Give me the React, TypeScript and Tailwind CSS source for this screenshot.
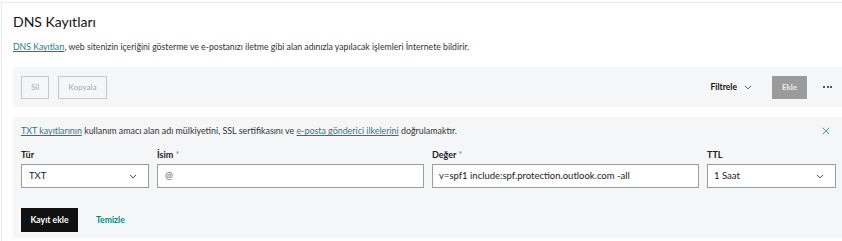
import React from "react";

const Chevron = ({ className = "" }: { className?: string }) => (
  <svg viewBox="0 0 12 8" className={className} fill="none" stroke="currentColor" strokeWidth="1.4" strokeLinecap="round" strokeLinejoin="round">
    <path d="M1.5 1.8 L6 6.2 L10.5 1.8" />
  </svg>
);

export default function App() {
  return (
    <div className="w-[842px] h-[241px] bg-white overflow-hidden" style={{ fontFamily: "Lato, 'Open Sans', sans-serif" }}>
      <div className="mt-[2px] ml-[1px] border-t border-l border-[#e8e8e8] pl-[11px] pt-[9px] h-[239px]">
        <h1 className="text-[14px] leading-[20px] text-[#111] font-normal">DNS Kayıtları</h1>
        <p className="mt-[9px] text-[8.7px] leading-[12px] text-[#333]">
          <a className="underline text-[#1b7d86] decoration-[#1b7d86]">DNS Kayıtları</a>, web sitenizin içeriğini gösterme ve e-postanızı iletme gibi alan adınızla yapılacak işlemleri İnternete bildirir.
        </p>
        <div className="mt-[14px] h-[40px] bg-[#f5f6f7] flex items-center pl-[8px] pr-[10px]">
          <button className="h-[23px] w-[28px] border border-[#c9c9c9] text-[8px] text-[#a8a8a8] bg-transparent">Sil</button>
          <button className="ml-[9px] h-[23px] w-[49px] border border-[#c9c9c9] text-[8px] text-[#a8a8a8] bg-transparent">Kopyala</button>
          <div className="flex-1" />
          <div className="flex items-center text-[8.5px] font-bold text-[#111]">
            Filtrele
            <Chevron className="ml-[7px] w-[8px] h-[5px] text-[#444]" />
          </div>
          <button className="ml-[20px] h-[23px] w-[35px] bg-[#9b9b9b] text-[8px] font-bold text-[#ececec]">Ekle</button>
          <div className="ml-[16px] flex gap-[1.5px] items-center">
            <span className="w-[2px] h-[2px] rounded-full bg-[#222]" />
            <span className="w-[2px] h-[2px] rounded-full bg-[#222]" />
            <span className="w-[2px] h-[2px] rounded-full bg-[#222]" />
          </div>
        </div>
        <div className="mt-[10px] h-[121px] bg-[#f5f6f7] pl-[8px] pr-[6px]">
          <div className="h-[27px] flex items-center pt-[1px]">
            <p className="text-[8.9px] text-[#333]">
              <a className="underline text-[#1b7d86]">TXT kayıtlarının</a> kullanım amacı alan adı mülkiyetini, SSL sertifikasını ve <a className="underline text-[#1b7d86]">e-posta gönderici ilkelerini</a> doğrulamaktır.
            </p>
            <div className="flex-1" />
            <svg viewBox="0 0 10 10" className="w-[8px] h-[8px] mr-[6px] text-[#3a8f8f]" stroke="currentColor" strokeWidth="1.1" fill="none">
              <path d="M1 1 L9 9 M9 1 L1 9" />
            </svg>
          </div>
          <div className="flex gap-[8px]">
            <div className="w-[128px]">
              <div className="h-[20px] text-[9px] font-bold text-[#222] leading-[20px] pt-[1px]">Tür</div>
              <div className="h-[24px] bg-white border border-[#9c9c9c] flex items-center px-[7px] text-[9.5px] text-[#222]">
                <span className="flex-1">TXT</span>
                <Chevron className="w-[8px] h-[5px] mr-[4px] text-[#333]" />
              </div>
            </div>
            <div className="w-[267px]">
              <div className="h-[20px] text-[9px] font-bold text-[#222] leading-[20px] pt-[1px]">İsim <span className="font-normal text-[#888]">*</span></div>
              <div className="h-[24px] bg-white border border-[#9c9c9c] flex items-center px-[7px] text-[9.5px] text-[#555]">@</div>
            </div>
            <div className="w-[267px]">
              <div className="h-[20px] text-[9px] font-bold text-[#222] leading-[20px] pt-[1px]">Değer <span className="font-normal text-[#888]">*</span></div>
              <div className="h-[24px] bg-white border border-[#9c9c9c] flex items-center px-[6px] text-[9.5px] text-[#222]">v=spf1 include:spf.protection.outlook.com -all</div>
            </div>
            <div className="w-[129px]">
              <div className="h-[20px] text-[9px] font-bold text-[#222] leading-[20px] pt-[1px]">TTL</div>
              <div className="h-[24px] bg-white border border-[#9c9c9c] flex items-center px-[6px] text-[9.5px] text-[#222]">
                <span className="flex-1">1 Saat</span>
                <Chevron className="w-[8px] h-[5px] mr-[5px] text-[#333]" />
              </div>
            </div>
          </div>
          <div className="mt-[20px] flex items-center">
            <button className="h-[24px] w-[57px] bg-[#111] text-white text-[8.6px] font-bold">Kayıt ekle</button>
            <span className="ml-[18px] text-[8.6px] font-bold text-[#1b7d86]">Temizle</span>
          </div>
        </div>
      </div>
    </div>
  );
}
